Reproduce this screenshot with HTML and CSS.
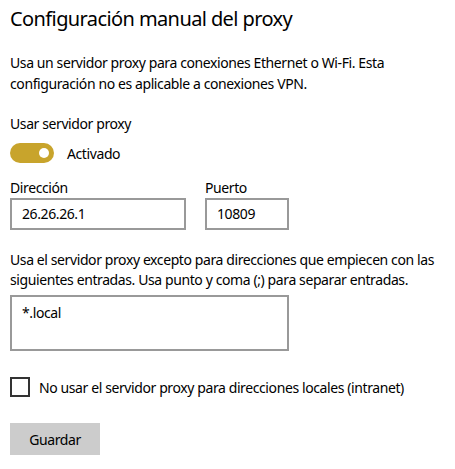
FILE: index.html
```html
<!DOCTYPE html>
<html lang="es">
<head>
    <meta charset="UTF-8">
    <title>Proxy</title>
    <link rel="stylesheet" href="styles.css">
</head>
<body>
    <div class="page">
        <h1 class="title">Configuración manual del proxy</h1>
        <p class="desc">Usa un servidor proxy para conexiones Ethernet o Wi-Fi. Esta configuración no es aplicable a conexiones VPN.</p>

        <div class="label">Usar servidor proxy</div>
        <div class="toggle-row">
            <span class="toggle"><span class="knob"></span></span>
            <span class="toggle-text">Activado</span>
        </div>

        <div class="fields">
            <div class="field field-addr">
                <div class="field-label">Dirección</div>
                <div class="box">26.26.26.1</div>
            </div>
            <div class="field field-port">
                <div class="field-label">Puerto</div>
                <div class="box">10809</div>
            </div>
        </div>

        <p class="desc exc">Usa el servidor proxy excepto para direcciones que empiecen con las siguientes entradas. Usa punto y coma (;) para separar entradas.</p>
        <div class="box area">*.local</div>

        <div class="check-row">
            <span class="check"></span>
            <span>No usar el servidor proxy para direcciones locales (intranet)</span>
        </div>

        <button class="save">Guardar</button>
    </div>
</body>
</html>
```

FILE: styles.css
```css
body {
    margin: 0;
    padding: 0;
    background: #fff;
    font-family: 'Segoe UI', 'Noto Sans', sans-serif;
    color: #000;
}
.page {
    padding: 5px 6px 0 10px;
    font-size: 14px;
    letter-spacing: -0.4px;
}
.title {
    margin: 0;
    font-size: 20px;
    font-weight: normal;
    line-height: 28px;
    letter-spacing: -0.6px;
}
.desc {
    margin: 19px 0 0 0;
    line-height: 21px;
}
.label {
    margin-top: 20px;
    line-height: 20px;
}
.toggle-row {
    margin-top: 9px;
    display: flex;
    align-items: center;
    gap: 13px;
    height: 20px;
}
.toggle {
    width: 44px;
    height: 20px;
    border-radius: 10px;
    background: #c8a42c;
    display: flex;
    align-items: center;
    justify-content: flex-end;
    padding-right: 5px;
    box-sizing: border-box;
}
.knob {
    width: 10px;
    height: 10px;
    border-radius: 50%;
    background: #fff;
}
.fields {
    margin-top: 15px;
    display: flex;
    gap: 19px;
}
.field-label {
    line-height: 20px;
}
.box {
    border: 2px solid #999;
    height: 32px;
    box-sizing: border-box;
    padding: 0 10px;
    line-height: 28px;
}
.field-addr .box {
    width: 176px;
}
.field-port .box {
    width: 84px;
}
.exc {
    margin-top: 20px;
    line-height: 20px;
}
.area {
    margin-top: 5px;
    width: 279px;
    height: 56px;
    padding-top: 2px;
}
.check-row {
    margin-top: 26px;
    display: flex;
    align-items: center;
    gap: 9px;
    height: 20px;
}
.check {
    width: 20px;
    height: 20px;
    border: 2px solid #333;
    box-sizing: border-box;
}
.save {
    margin-top: 26px;
    display: block;
    width: 90px;
    height: 32px;
    border: none;
    background: #ccc;
    font-family: inherit;
    font-size: 14px;
    letter-spacing: -0.4px;
    color: #000;
    padding: 0;
}
```
